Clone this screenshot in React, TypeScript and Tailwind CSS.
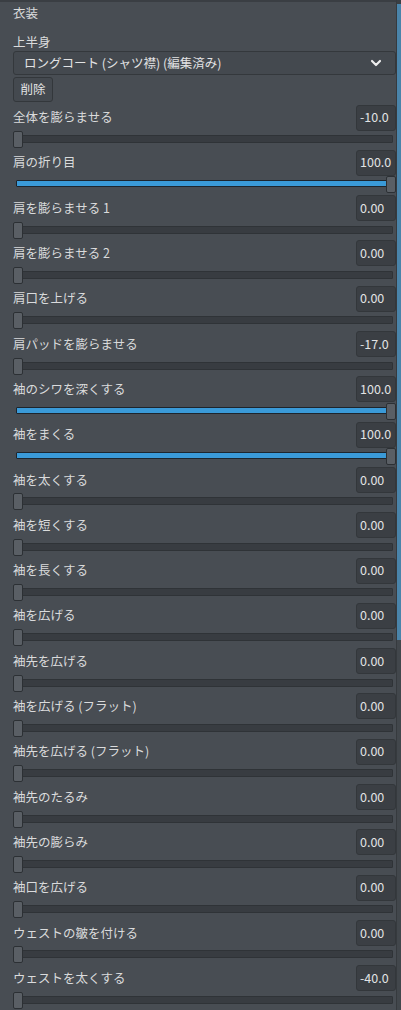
import { ChevronDown } from "lucide-react";

type Param = { label: string; value: string; full?: boolean };

const PARAMS: Param[] = [
  { label: "全体を膨らませる", value: "-10.0" },
  { label: "肩の折り目", value: "100.0", full: true },
  { label: "肩を膨らませる 1", value: "0.00" },
  { label: "肩を膨らませる 2", value: "0.00" },
  { label: "肩口を上げる", value: "0.00" },
  { label: "肩パッドを膨らませる", value: "-17.0" },
  { label: "袖のシワを深くする", value: "100.0", full: true },
  { label: "袖をまくる", value: "100.0", full: true },
  { label: "袖を太くする", value: "0.00" },
  { label: "袖を短くする", value: "0.00" },
  { label: "袖を長くする", value: "0.00" },
  { label: "袖を広げる", value: "0.00" },
  { label: "袖先を広げる", value: "0.00" },
  { label: "袖を広げる (フラット)", value: "0.00" },
  { label: "袖先を広げる (フラット)", value: "0.00" },
  { label: "袖先のたるみ", value: "0.00" },
  { label: "袖先の膨らみ", value: "0.00" },
  { label: "袖口を広げる", value: "0.00" },
  { label: "ウェストの皺を付ける", value: "0.00" },
  { label: "ウェストを太くする", value: "-40.0" },
];

function Slider({ full }: { full?: boolean }) {
  return (
    <div className="relative h-[18px]">
      <div
        className={
          full
            ? "mx-[3px] mt-[4px] h-[7px] rounded-[1px] border border-[#1d252d] bg-[#3a9ad8]"
            : "mx-[3px] mt-[4px] h-[8px] rounded-[1px] border border-[#2f3337] bg-[#383c41]"
        }
      />
      <div
        className={`absolute top-0 h-[17px] w-[10px] rounded-[2px] border border-[#2c3034] bg-[#5a5f65] ${
          full ? "right-0" : "left-0"
        }`}
      />
    </div>
  );
}

function ParamRow({ param }: { param: Param }) {
  return (
    <div className="flex h-[45.3px] flex-col">
      <div className="flex h-[27px] items-center justify-between">
        <span className="text-[12.5px] text-[#dadbdc]">{param.label}</span>
        <div className="flex h-[26px] w-[40px] items-center rounded-[3px] border border-[#33373b] bg-[#3b3f44] pl-[3px] text-[12.5px] text-[#e2e3e4]">
          {param.value}
        </div>
      </div>
      <Slider full={param.full} />
    </div>
  );
}

export default function App() {
  return (
    <div
      className="flex h-[1010px] w-full overflow-hidden bg-[#484d53]"
      style={{ fontFamily: '"Noto Sans CJK JP", "Noto Sans", sans-serif' }}
    >
      <div className="flex flex-1 flex-col">
        <div className="h-[3px] bg-[#3a3e43]" />
        <div className="flex flex-col pl-[13px]">
          <div className="h-[22px] text-[12.5px] leading-[22px] text-[#dadbdc]">衣装</div>
          <div className="h-[27px] pt-[9px] text-[12.5px] leading-[18px] text-[#dadbdc]">上半身</div>
          <div className="flex h-[24px] items-center justify-between rounded-[3px] border border-[#34383c] bg-[#44494f] pl-[10px] pr-[11px] text-[12.5px] text-[#e2e3e4]">
            <span>ロングコート (シャツ襟) (編集済み)</span>
            <ChevronDown size={16} strokeWidth={3.2} className="text-[#eeeeee]" />
          </div>
          <div className="mt-[2px] flex h-[25px] w-[40px] items-center justify-center rounded-[3px] border border-[#33373b] bg-[#44494f] text-[12.5px] text-[#e2e3e4]">
            削除
          </div>
          <div className="mt-[2px] flex flex-col">
            {PARAMS.map((p) => (
              <ParamRow key={p.label} param={p} />
            ))}
          </div>
        </div>
      </div>
      <div className="flex w-[5px] flex-col border-l border-[#363a3e]">
        <div className="h-[4px] bg-[#3a3e43]" />
        <div className="h-[636px] bg-[#4a84aa]" />
        <div className="flex-1 bg-[#42474c]" />
      </div>
    </div>
  );
}
